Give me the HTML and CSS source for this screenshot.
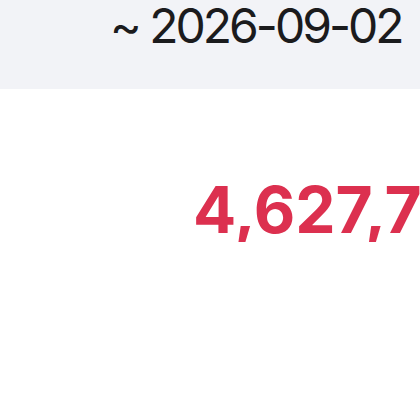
FILE: index.html
```html
<!DOCTYPE html>
<html>
<head>
<meta charset="utf-8">
<link rel="stylesheet" href="styles.css">
</head>
<body>
<div class="page">
  <div class="range">
    <span class="range-text">~ 2026-09-02</span>
  </div>
  <div class="amount">
    <span class="amount-text">4,627,789</span>
  </div>
</div>
</body>
</html>
```
FILE: styles.css
```css
html, body {
  margin: 0;
  padding: 0;
  background: #ffffff;
}
.page {
  width: 420px;
  height: 420px;
  overflow: hidden;
  font-family: Inter, "Noto Sans", sans-serif;
}
.range {
  height: 89px;
  box-sizing: border-box;
  background: #f2f3f7;
  padding: 2px 0 0 110px;
  white-space: nowrap;
  overflow: hidden;
}
.range-text {
  font-size: 48px;
  line-height: 48px;
  letter-spacing: -3px;
  color: #1b1b1d;
  font-weight: 400;
}
.amount {
  margin-top: 89px;
  padding-left: 193px;
  white-space: nowrap;
  overflow: hidden;
}
.amount-text {
  font-size: 64px;
  line-height: 64px;
  font-weight: 700;
  color: #dc304f;
}
```
